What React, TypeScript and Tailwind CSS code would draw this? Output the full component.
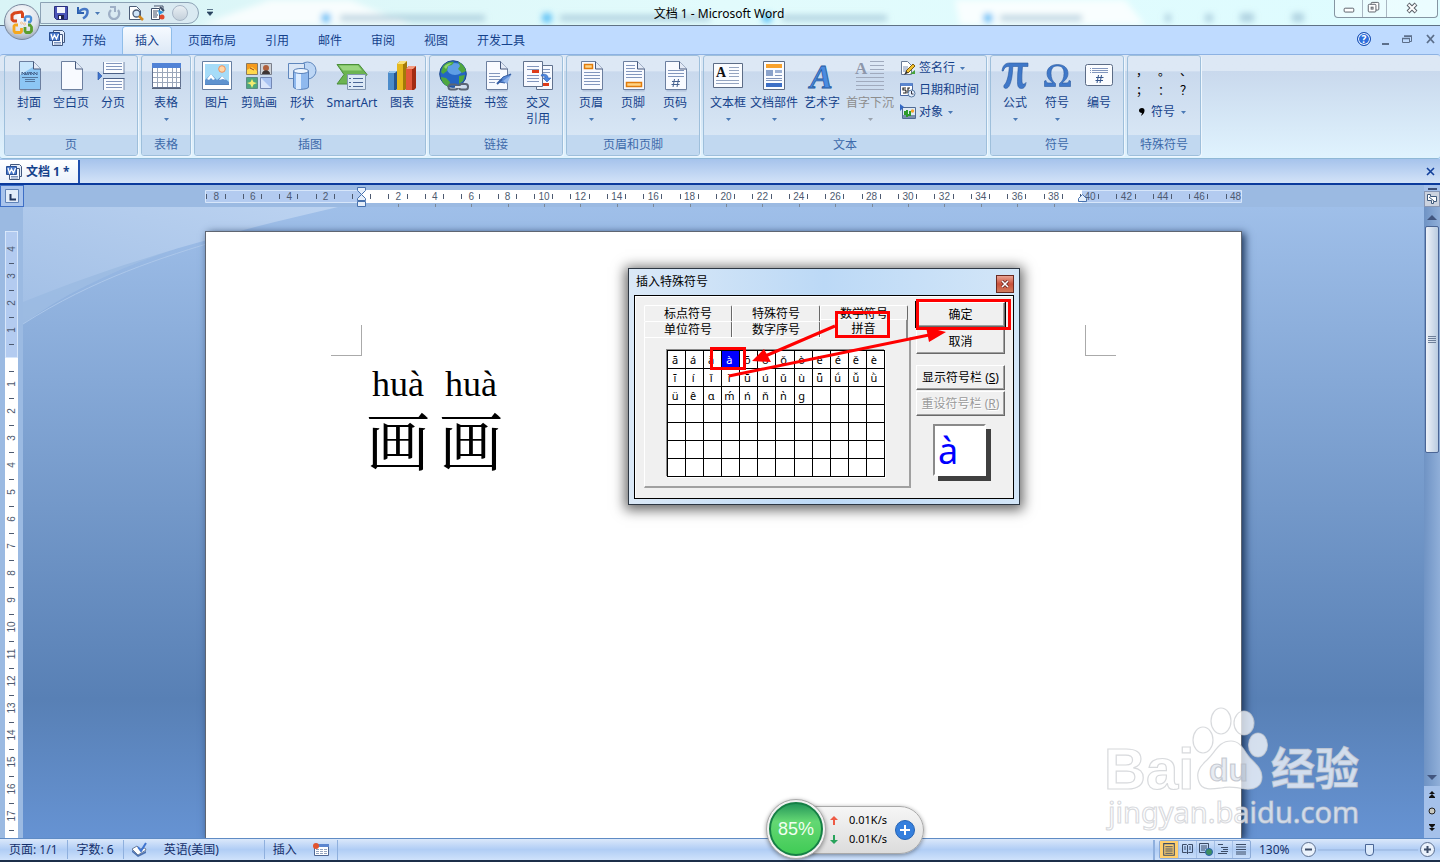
import { ReactNode, useState } from "react";

type Tool = {
  label: string;
  second?: string;
  icon: ReactNode;
  width: string;
  arrow?: boolean;
  disabled?: boolean;
};

const tabs = ["开始", "插入", "页面布局", "引用", "邮件", "审阅", "视图", "开发工具"];

const symbolRows = [
  ["ā", "á", "ǎ", "à", "ō", "ó", "ǒ", "ò", "ē", "é", "ě", "è"],
  ["ī", "í", "ǐ", "ì", "ū", "ú", "ǔ", "ù", "ǖ", "ǘ", "ǚ", "ǜ"],
  ["ü", "ê", "ɑ", "ḿ", "ń", "ň", "ǹ", "ɡ", "", "", "", ""],
  Array(12).fill(""),
  Array(12).fill(""),
  Array(12).fill(""),
  Array(12).fill(""),
];

function Lines({ x1, x2, ys, color = "#8296bd" }: { x1: number; x2: number; ys: number[]; color?: string }) {
  return (
    <g stroke={color} strokeWidth="1">
      {ys.map((y) => (
        <path key={y} d={`M${x1} ${y + 0.5}H${x2}`} />
      ))}
    </g>
  );
}

function Big({ children }: { children: ReactNode }) {
  return (
    <svg viewBox="0 0 32 32" className="h-8 w-8 shrink-0" aria-hidden="true">
      {children}
    </svg>
  );
}

function Sheet({ fill = "#f8faff" }: { fill?: string }) {
  return (
    <>
      <path d="M7.5 3.5h14l6 7v21h-20z" fill="#8fa3c4" opacity=".4" />
      <path d="M6.500 1.500h14l7 7.500v20.500h-21z" fill={fill} stroke="#6c7f9f" />
      <path d="M20.500 1.500v7.500h7" fill="#e3eaf6" stroke="#46597c" />
    </>
  );
}

const CoverIcon = (
  <Big>
    <Sheet fill="#8cc6f4" />
    <path d="M7 2h13v5l-13 8z" fill="#c8e6fc" />
    <path d="M9 15v-3l3 3v-3l1 3 2-3v3l2-3 1 3v-3l3 3v-3l3 3v-3" fill="none" stroke="#46658f" />
    <Lines x1={9} x2={25} ys={[17]} color="#54779f" />
    <Lines x1={12} x2={22} ys={[19, 21]} color="#54779f" />
  </Big>
);

const BlankIcon = (
  <Big>
    <Sheet />
  </Big>
);

const BreakIcon = (
  <Big>
    <path d="M6.500 2v11.500h20.500V2M6.500 30V18.500h20.500V30" fill="#fafcff" stroke="#7689ab" />
    <path d="M6 13.500h21.500M6 18.500h21.500" stroke="#4a5f86" />
    <Lines x1={9} x2={25} ys={[3, 6, 9, 21, 24, 27]} />
    <path d="M1 12l4 4-4 4z" fill="#3f74d0" stroke="#23509f" strokeWidth=".6" />
  </Big>
);

const TableIcon = (
  <Big>
    <path d="M2.500 3.500h28v24h-28z" fill="#fff" stroke="#61718f" />
    <path d="M2 3h29v5H2z" fill="#5082d6" />
    <path d="M3 12.500h27M3 17.500h27M3 22.500h27M7.500 8v19M12.500 8v19M17.500 8v19M22.500 8v19M26.500 8v19" stroke="#9ba7ba" />
    <path d="M2 28.500h29" stroke="#58657c" />
  </Big>
);

const PictureIcon = (
  <Big>
    <path d="M1.500 1.500h29v28h-29z" fill="#fff" stroke="#667fa2" />
    <path d="M4 4h24v20H4z" fill="#a6dcf8" />
    <circle cx="21" cy="9" r="3.300" fill="#ffd7a8" stroke="#f0905a" />
    <path d="M4 24v-4l6-6 4 4 2 2 5-4 7 6v2z" fill="#5f93cf" />
    <path d="M6 19l4-5 4 5-2 1-2-2-2 2zM18 20l3-4 4 4-3-1z" fill="#fff" />
    <path d="M4 24.500h24" stroke="#5585c0" />
  </Big>
);

const ClipIcon = (
  <Big>
    <path d="M3.500 3.500h11v11h-11z" fill="#f59a1d" stroke="#8a7a5e" />
    <path d="M4 10l5-3 5 4v3H4z" fill="#ffd84b" />
    <path d="M7 8l4 2" stroke="#a43e1b" />
    <path d="M17.500 3.500h11v11h-11z" fill="#cfd3d8" stroke="#7a7f8b" />
    <circle cx="23" cy="8" r="3" fill="#b0603c" />
    <path d="M19 14c0-5 8-5 8 0z" fill="#3d3434" />
    <path d="M3.500 17.500h11v11h-11z" fill="#4ea77d" stroke="#5b8d84" />
    <path d="M9 19l1.500 3 3.500 1-3.500 1.500L9 28l-1.500-3.500L4 23l3.500-1z" fill="#f3ec6f" />
    <path d="M17.500 17.500h11v11h-11z" fill="#a9c3f2" stroke="#7488b4" />
    <path d="M18 18l10 10H18z" fill="#d9e5fb" />
  </Big>
);

const ShapesIcon = (
  <Big>
    <circle cx="21.500" cy="10.500" r="8.500" fill="#bcd6f5" stroke="#5f87bd" />
    <path d="M2.500 3.500h16v15h-16z" fill="#dbe7f6" stroke="#5f87bd" />
    <path d="M7.500 11v16c0 3 15 3 15 0V11z" fill="#8fb9ee" stroke="#5880b8" />
    <path d="M10 12v17h5V12z" fill="#dcecff" />
    <ellipse cx="15" cy="11" rx="7.500" ry="2.500" fill="#eef6ff" stroke="#5880b8" />
  </Big>
);

const SmartArtIcon = (
  <Big>
    <path d="M1 4.500h22l8 10-8 9.500H1l7-9.500z" fill="#6cb452" stroke="#4b8f3a" />
    <path d="M3 5.500h19l4 5H7z" fill="#9ad57f" />
    <path d="M11.500 14.500h18v15h-18z" fill="#dce9f6" stroke="#8196b0" />
    <Lines x1={17} x2={27} ys={[18, 22, 26]} color="#4b6796" />
    <Lines x1={13} x2={15} ys={[18, 22, 26]} color="#4b6796" />
  </Big>
);

const ChartIcon = (
  <Big>
    <path d="M2 13l2-2h8v17l-2 2H2z" fill="#27568e" />
    <path d="M2 13h6v17H2z" fill="#4c8ccb" />
    <path d="M2 13l2-2h7l-2 2z" fill="#97c6ee" />
    <path d="M11 4l3-3h7v27l-2 2h-8z" fill="#a37a08" />
    <path d="M11 4h6v26h-6z" fill="#e5b81d" />
    <path d="M11 4l3-3h7l-3 3z" fill="#fae27c" />
    <path d="M20 9l3-3h7v22l-2 2h-8z" fill="#a22c13" />
    <path d="M20 9h6v21h-6z" fill="#e2573a" />
    <path d="M20 9l3-3h7l-3 3z" fill="#f59d82" />
  </Big>
);

const GlobeIcon = (
  <Big>
    <circle cx="15" cy="14" r="13.300" fill="#2465c4" stroke="#1d4889" />
    <ellipse cx="17" cy="9" rx="8" ry="6" fill="#77b6f4" opacity=".7" />
    <path d="M5 6c3-4 8-5 11-4l-2 3-4 1-1 5-4 3-2-2zM20 2c4 1 7 5 8 9l-4 2-4-4 2-3zM3 17l5 1 4 4-1 5c-4-1-8-6-8-10zM21 16l6-1-2 6-4 3z" fill="#4fa73f" />
    <path d="M6 7c2-3 5-4 8-4l-4 3-2 3z" fill="#8fd56d" />
    <rect x="10.500" y="24.500" width="9" height="5" rx="2.500" fill="none" stroke="#5a6575" strokeWidth="2" />
    <rect x="21" y="24" width="9" height="5.500" rx="2.500" fill="none" stroke="#5a6575" strokeWidth="2" />
    <path d="M17 27h7" stroke="#d7dee8" strokeWidth="2" />
  </Big>
);

const BookmarkIcon = (
  <Big>
    <Sheet />
    <Lines x1={9} x2={20} ys={[13, 16, 19]} />
    <Lines x1={9} x2={15} ys={[22]} />
    <path d="M31 14l-8 3-4 5 6 1z" fill="#5a8ad6" stroke="#345da3" />
    <path d="M22 19l-5 5" stroke="#345da3" strokeWidth="2" />
    <path d="M31 15l-4 9-4-3z" fill="#8fb3ea" />
  </Big>
);

const CrossRefIcon = (
  <Big>
    <path d="M14.500 5.500h16v24h-16z" fill="#f7faff" stroke="#61728e" />
    <Lines x1={21} x2={28} ys={[9, 12]} />
    <path d="M1.500 1.500h19v25h-19z" fill="#f8faff" stroke="#61728e" />
    <Lines x1={5} x2={17} ys={[6, 9, 15, 18, 21]} />
    <path d="M10 10h7v3h-7zM21 23h6v3h-6z" fill="#dd3b1a" />
    <path d="M20 14c4 0 6 1 6 4h3l-4 4-4-4h2c0-2-1-2-4-2z" fill="#4b86df" stroke="#2e5cab" strokeWidth=".6" />
  </Big>
);

const HeaderIcon = (
  <Big>
    <Sheet />
    <path d="M9.500 4.500h8v4h-8z" fill="#ffd385" stroke="#e07b0c" strokeWidth="1.500" />
    <Lines x1={9} x2={25} ys={[12, 15, 18, 21, 24]} />
  </Big>
);

const FooterIcon = (
  <Big>
    <Sheet />
    <Lines x1={9} x2={18} ys={[5, 8]} />
    <Lines x1={9} x2={25} ys={[11, 14, 17]} />
    <path d="M9.500 22.500h15v4h-15z" fill="#ffd385" stroke="#e07b0c" strokeWidth="1.500" />
  </Big>
);

const PageNumberIcon = (
  <Big>
    <Sheet />
    <Lines x1={9} x2={25} ys={[10, 13, 16]} />
    <path d="M15.500 19l-1.500 8M19.500 19l-1.500 8M13 21.500h8M12.500 24.500h8" stroke="#46618f" />
  </Big>
);

const TextBoxIcon = (
  <Big>
    <path d="M1.500 3.500h29v24h-29z" fill="#fafcff" stroke="#5c6c86" />
    <Lines x1={17} x2={27} ys={[7, 10, 13, 16]} color="#94a4c0" />
    <Lines x1={4} x2={27} ys={[20, 23]} color="#94a4c0" />
    <text x="4" y="17" fontSize="14" fontWeight="bold" fontFamily="Liberation Serif, serif" fill="#111">A</text>
  </Big>
);

const PartsIcon = (
  <Big>
    <path d="M5.500 1.500h21v28h-21z" fill="#fafcff" stroke="#5c6c86" />
    <path d="M8 4h16v4H8z" fill="#f8a22d" />
    <path d="M8 10h7v6H8z" fill="#8ba3cb" />
    <path d="M17 10h7v3h-7z" fill="#9eb2d4" />
    <Lines x1={17} x2={24} ys={[15]} />
    <Lines x1={8} x2={24} ys={[18, 20]} />
    <path d="M8 23h16v4H8z" fill="#3c6fc6" />
  </Big>
);

const WordArtIcon = (
  <Big>
    <text x="4" y="28" fontSize="34" fontStyle="italic" fontWeight="bold" fontFamily="Liberation Serif, serif" fill="#4a8be0" stroke="#24599f" strokeWidth=".8">A</text>
  </Big>
);

const DropCapIcon = (
  <Big>
    <text x="1" y="14" fontSize="17" fontWeight="bold" fontFamily="Liberation Serif, serif" fill="#8d97ab">A</text>
    <Lines x1={16} x2={30} ys={[1, 5, 9, 13]} color="#a0aabd" />
    <Lines x1={2} x2={30} ys={[17, 21, 25, 29]} color="#a0aabd" />
  </Big>
);

const PiIcon = (
  <Big>
    <path d="M3 11c.5-5 3-8 7.500-8H29v3.500h-5.500c-.5 6-.8 11-.5 15 .2 3 2 3.500 4 1-.3 4-2 6-4.500 6-3.500 0-4-3-4-7 0-5 .3-10 .8-15h-5.500c-.3 9-1.500 16-4 20-1.500 2.500-5 2.500-5 0 0-1.500 1-2 2-3.500 2-4 3-9 3.500-16.500-3-.2-4.800 1-6 4.500z" fill="#3f78c9" stroke="#2c5b9f" strokeWidth=".6" />
  </Big>
);

const OmegaIcon = (
  <Big>
    <path d="M3.500 26.500v-5.500l1.500-.5c.5 2 1 2.500 3 2.500h4c-4-3-6-6-6-9.500 0-5.500 4-9 10.500-9s10.500 3.500 10.500 9c0 3.500-2 6.500-6 9.500h4c2 0 2.500-.5 3-2.500l1.500.5v5.500H18.500v-3c3-2 4.500-5.500 4.500-10 0-5-2-7.500-6.500-7.500S10 8.500 10 13.500c0 4.500 1.500 8 4.500 10v3z" fill="#3f78c9" stroke="#2c5b9f" strokeWidth=".6" />
  </Big>
);

const NumberIcon = (
  <Big>
    <rect x="2.500" y="4.500" width="27" height="21" rx="2" fill="#fafcff" stroke="#5c6c86" />
    <Lines x1={9} x2={25} ys={[8, 10, 12]} />
    <Lines x1={7} x2={8} ys={[8, 10, 12]} />
    <path d="M15.500 15l-1.500 8M18.500 15l-1.500 8M13 17.500h7.500M12.500 20.500h7.500" stroke="#34558c" />
  </Big>
);

function Caret({ disabled }: { disabled?: boolean }) {
  return (
    <svg viewBox="0 0 5 3" className="h-[3px] w-[5px] shrink-0" aria-hidden="true">
      <path d="M0 0h5L2.500 3z" fill={disabled ? "#9aa3ae" : "#4a79b5"} />
    </svg>
  );
}

function ToolButton({ tool }: { tool: Tool }) {
  return (
    <button
      disabled={tool.disabled}
      className={`flex flex-col items-center whitespace-nowrap ${tool.width} ${tool.disabled ? "text-[#8d8d8d]" : "text-[#15428b]"}`}
    >
      {tool.icon}
      <span className="mt-[3px] leading-4">{tool.label}</span>
      {tool.second && <span className="leading-4">{tool.second}</span>}
      {tool.arrow && (
        <span className="flex h-4 items-center">
          <Caret disabled={tool.disabled} />
        </span>
      )}
    </button>
  );
}

function Group({ title, tools = [], children }: { title: string; tools?: Tool[]; children?: ReactNode }) {
  return (
    <section className="flex shrink-0 flex-col overflow-hidden rounded-[3px] border border-[#9ebfdb] bg-linear-to-b from-[#dde8f5] from-15% via-[#c9d9ed] via-16% to-[#dceaf7] shadow-[1px_1px_0_#eef6fd]">
      <div className="flex flex-1 items-start px-[3px] pt-1">
        {tools.map((tool) => (
          <ToolButton key={tool.label} tool={tool} />
        ))}
        {children}
      </div>
      <h2 className="h-5 bg-[#c1d8f0] text-center leading-5 text-[#3e6aaa]">{title}</h2>
    </section>
  );
}

function WordIcon() {
  return (
    <svg viewBox="0 0 16 16" className="h-4 w-4 shrink-0" aria-hidden="true">
      <path d="M4.500.5h9l2 2v10h-11z" fill="#e6eefb" stroke="#42587f" />
      <path d="M3.500 4.500h10v11h-10z" fill="#f4f8ff" stroke="#42587f" />
      <path d="M5 12.500h7M5 14h7" stroke="#7c93bc" />
      <path d="M.5 2.500h10v8H.5z" fill="#4a78c8" stroke="#274d92" />
      <path d="M2 4l1.500 5L5.500 5l2 4L9.500 4" fill="none" stroke="#fff" strokeWidth="1.300" />
    </svg>
  );
}

function OfficeButton() {
  return (
    <button aria-label="Office" className="absolute top-1 left-1 z-10 h-9 w-9">
      <svg viewBox="0 0 36 36" className="h-full w-full">
        <defs>
          <radialGradient id="orb" cx=".5" cy=".3" r=".75">
            <stop offset="0" stopColor="#fff" />
            <stop offset=".6" stopColor="#dde3eb" />
            <stop offset="1" stopColor="#93a0b3" />
          </radialGradient>
        </defs>
        <circle cx="18" cy="18" r="17.500" fill="url(#orb)" stroke="#77869c" />
        <g fill="none" strokeLinejoin="round">
          <path d="M13 17H9.500L8 15.500V11L10.500 9l7-1 1 1.500V14" stroke="#d8471c" strokeWidth="3" />
          <path d="M21 17.500V14l1-1.500h4l1 1v3l-1 1.500h-2" stroke="#4a8fd8" strokeWidth="2.400" />
          <path d="M14 21h-3l-1 1v5l1 1.500h5.500l1-1V24" stroke="#f5a81d" strokeWidth="2.800" />
          <path d="M21 23v4l1 1.500h4l1.500-1.500v-4L26 21h-2" stroke="#5a9e2d" strokeWidth="2.800" />
        </g>
        <g fill="#fff" stroke="#e9a05a" strokeWidth=".6">
          <circle cx="17.500" cy="19" r="1" />
          <circle cx="20.500" cy="20" r="1" />
        </g>
      </svg>
    </button>
  );
}

function TitleBar() {
  return (
    <header className="relative flex h-[26px] shrink-0 items-start justify-between border-b border-[#5f7285] bg-linear-to-r from-[#d9f4f6] via-[#e2fbfc] to-[#defcff]">
      {/* tabs of the window behind showing through the glass */}
      <svg className="absolute inset-0 h-full w-full" aria-hidden="true">
        <defs>
          <filter id="glass" x="-20%" y="-50%" width="140%" height="200%">
            <feGaussianBlur stdDeviation="3" />
          </filter>
        </defs>
        <g filter="url(#glass)">
          <path d="M270 0h80l60 25H200zM955 0h170l20 25H960z" fill="#fff" opacity=".8" />
          <g fill="#8fb6cc" opacity=".6">
            <path d="M340 15h145v6H340zM560 15h150v6H560zM782 15h105v6H782zM1000 15h82v6h-82zM1165 14h6v8h-6zM1205 14h8v8h-8zM1240 13h14v9h-14zM1292 13h12v9h-12z" />
          </g>
          <g fill="#55bdf5">
            <circle cx="326" cy="18" r="5" />
            <circle cx="547" cy="18" r="5" />
            <circle cx="767" cy="18" r="5" />
            <circle cx="988" cy="18" r="5" />
          </g>
        </g>
      </svg>
      <div className="relative flex flex-1 items-start">
        <div className="mt-[2px] ml-10 flex h-[22px] w-[159px] items-center rounded-r-full border border-[#8ca2b5] bg-[#d9e7f0]/80 pl-3">
          <button aria-label="保存" className="h-4 w-4">
            <svg viewBox="0 0 16 16">
              <path d="M1.500 1.500h13v13h-11l-2-2z" fill="#4b55b8" stroke="#2a2f7d" />
              <path d="M4 2h8v6H4z" fill="#f2f4fb" />
              <path d="M5 10h6v4H5z" fill="#20244e" />
              <path d="M6 11h2v3H6z" fill="#fff" />
            </svg>
          </button>
          <button aria-label="撤消" className="ml-[6px] h-4 w-4">
            <svg viewBox="0 0 16 16">
              <path d="M3 2v6h6" fill="none" stroke="#2c5fae" strokeWidth="2" />
              <path d="M4 7c3-4 9-4 8.500 0 0 3-2 5-4.500 6.500" fill="none" stroke="#4678c6" strokeWidth="2.600" />
            </svg>
          </button>
          <span className="ml-1">
            <Caret />
          </span>
          <button aria-label="恢复" className="ml-[6px] h-4 w-4">
            <svg viewBox="0 0 16 16">
              <path d="M12 5c3 4 0 9-4 9s-7-5-3-9" fill="none" stroke="#9fb0c6" strokeWidth="2.200" />
              <path d="M4 2h5v5" fill="none" stroke="#9fb0c6" strokeWidth="2" />
            </svg>
          </button>
          <button aria-label="打印预览" className="ml-[6px] h-4 w-4">
            <svg viewBox="0 0 16 16">
              <path d="M1.500 1.500h7l4 4v9h-11z" fill="#fff" stroke="#4b5c77" />
              <circle cx="8.500" cy="8.500" r="3.500" fill="#cfe4f8" stroke="#4b5c77" strokeWidth="1.300" />
              <path d="M11 11l4 4" stroke="#d58a1d" strokeWidth="2.500" />
            </svg>
          </button>
          <button aria-label="修订" className="ml-[6px] h-4 w-4">
            <svg viewBox="0 0 16 16">
              <path d="M1.500 3.500h8v11h-8zM4 1h9v5" fill="#fff" stroke="#3f4f68" />
              <path d="M3 6h5M3 8h4M3 10h5M3 12h4" stroke="#3f4f68" />
              <path d="M8 5l6 2-5 3z" fill="#2d91d8" />
              <circle cx="12" cy="12" r="2.500" fill="#e3492c" />
              <path d="M10 2l4 4" stroke="#3f4f68" strokeWidth="2" />
            </svg>
          </button>
          <button aria-label="其他" className="ml-[6px] h-4 w-4 rounded-full border border-[#a8b6c6] bg-linear-to-b from-[#e9eff4] to-[#c4d0db]" />
        </div>
        <button aria-label="自定义快速访问工具栏" className="mt-[9px] ml-2">
          <svg viewBox="0 0 6 7" className="h-[7px] w-[6px]">
            <path d="M0 .5h6M0 3h6L3 6.500z" fill="#28425e" stroke="#28425e" strokeWidth=".7" />
          </svg>
        </button>
      </div>
      <h1 className="relative pt-[5px] leading-[18px] text-black">文档 1 - Microsoft Word</h1>
      <div className="relative flex flex-1 justify-end pr-[2px]">
        <div className="flex h-[18px] rounded-b-[4px] border border-t-0 border-[#8595a2] bg-white/40">
          <button aria-label="最小化" className="w-7 border-r border-[#a9b7c2]">
            <svg viewBox="0 0 28 17">
              <rect x="9.500" y="8.500" width="10" height="4" rx="1" fill="#fff" stroke="#5b6068" />
            </svg>
          </button>
          <button aria-label="还原" className="w-6 border-r border-[#a9b7c2]">
            <svg viewBox="0 0 24 17">
              <rect x="8.500" y="2.500" width="8" height="8" rx="1" fill="#fff" stroke="#5b6068" />
              <rect x="5.500" y="4.500" width="8" height="8" rx="1" fill="#fff" stroke="#5b6068" />
              <rect x="8.500" y="7.500" width="2" height="2" fill="#fff" stroke="#5b6068" />
            </svg>
          </button>
          <button aria-label="关闭" className="w-[50px]">
            <svg viewBox="0 0 50 17">
              <path d="M21 4l8 8M29 4l-8 8" stroke="#5b6068" strokeWidth="4" />
              <path d="M21.500 4.500l7 7M28.500 4.500l-7 7" stroke="#fff" strokeWidth="2" />
            </svg>
          </button>
        </div>
      </div>
    </header>
  );
}

function TabRow() {
  const [active, setActive] = useState("插入");
  return (
    <nav className="flex h-7 shrink-0 items-end bg-[#bfdbff] pl-[49px] text-[#15428b]">
      <div className="mb-2 mr-[5px]">
        <WordIcon />
      </div>
      <div className="flex h-[27px] gap-[5px]">
        {tabs.map((tab) => (
          <button
            key={tab}
            onClick={() => setActive(tab)}
            className={`rounded-t-[3px] px-3 leading-[24px] ${active === tab ? "bg-linear-to-b from-[#f6faff] to-[#dce8f6] shadow-[0_0_0_1px_#8fbde9]" : ""}`}
          >
            {tab}
          </button>
        ))}
      </div>
      <div className="mb-2 ml-auto flex items-center gap-[11px] pr-1">
        <button aria-label="帮助" className="h-[14px] w-[14px] rounded-full border border-[#1a4fb0] bg-[#2f6fdc] text-[10px] leading-3 font-bold text-white shadow-[inset_0_0_0_1px_#fff]">
          ?
        </button>
        <button aria-label="最小化文档" className="flex h-3 w-2 items-end">
          <span className="h-[2px] w-[7px] bg-[#5c6f8a]" />
        </button>
        <button aria-label="还原文档" className="h-3 w-3">
          <svg viewBox="0 0 12 12">
            <path d="M3.500 4V3.500h7v5H9M1.500 5.500h7v4h-7z" fill="none" stroke="#5c6f8a" />
            <path d="M3 3h8M1 5.500h8" stroke="#5c6f8a" strokeWidth="1.500" />
          </svg>
        </button>
        <button aria-label="关闭文档" className="h-3 w-3">
          <svg viewBox="0 0 12 12">
            <path d="M3 2l7 8M10 2l-7 8" stroke="#5c6f8a" strokeWidth="1.800" />
          </svg>
        </button>
      </div>
    </nav>
  );
}

function Ribbon() {
  return (
    <div className="flex h-[105px] shrink-0 gap-[3px] overflow-hidden rounded-[3px] border-t border-b border-[#8db2e3] border-b-[#8fb8d6] bg-linear-to-b from-[#dde8f5] from-15% via-[#c9d9ed] via-16% to-[#e0f3fe] px-1 pb-[2px]">
      <Group
        title="页"
        tools={[
          { label: "封面", icon: CoverIcon, width: "w-[42px]", arrow: true },
          { label: "空白页", icon: BlankIcon, width: "w-[42px]" },
          { label: "分页", icon: BreakIcon, width: "w-[42px]" },
        ]}
      />
      <Group title="表格" tools={[{ label: "表格", icon: TableIcon, width: "w-[42px]", arrow: true }]} />
      <Group
        title="插图"
        tools={[
          { label: "图片", icon: PictureIcon, width: "w-[38px]" },
          { label: "剪贴画", icon: ClipIcon, width: "w-[46px]" },
          { label: "形状", icon: ShapesIcon, width: "w-[40px]", arrow: true },
          { label: "SmartArt", icon: SmartArtIcon, width: "w-[60px]" },
          { label: "图表", icon: ChartIcon, width: "w-[40px]" },
        ]}
      />
      <Group
        title="链接"
        tools={[
          { label: "超链接", icon: GlobeIcon, width: "w-[42px]" },
          { label: "书签", icon: BookmarkIcon, width: "w-[42px]" },
          { label: "交叉", second: "引用", icon: CrossRefIcon, width: "w-[42px]" },
        ]}
      />
      <Group
        title="页眉和页脚"
        tools={[
          { label: "页眉", icon: HeaderIcon, width: "w-[42px]", arrow: true },
          { label: "页脚", icon: FooterIcon, width: "w-[42px]", arrow: true },
          { label: "页码", icon: PageNumberIcon, width: "w-[42px]", arrow: true },
        ]}
      />
      <Group
        title="文本"
        tools={[
          { label: "文本框", icon: TextBoxIcon, width: "w-[42px]", arrow: true },
          { label: "文档部件", icon: PartsIcon, width: "w-[50px]", arrow: true },
          { label: "艺术字", icon: WordArtIcon, width: "w-[46px]", arrow: true },
          { label: "首字下沉", icon: DropCapIcon, width: "w-[50px]", arrow: true, disabled: true },
        ]}
      >
        <div className="-mt-[3px] flex w-[88px] flex-col pl-[5px] text-[#15428b]">
          <button className="flex h-[22px] items-center gap-[3px] whitespace-nowrap">
            <svg viewBox="0 0 16 16" className="h-4 w-4">
              <path d="M1.500 1.500h6l4 4v9h-10z" fill="#fff" stroke="#6a7b96" />
              <path d="M3 7h5M3 9h5M3 11h4" stroke="#7c90b4" />
              <path d="M13 4l-7 7 2 2 7-7z" fill="#f2c131" stroke="#7b5a0e" />
              <path d="M6 11l-2 4 4-2z" fill="#333" />
              <path d="M10 14h5v-4z" fill="#46a13b" />
            </svg>
            签名行
            <span className="ml-[2px]">
              <Caret />
            </span>
          </button>
          <button className="flex h-[22px] items-center gap-[3px] whitespace-nowrap">
            <svg viewBox="0 0 16 16" className="h-4 w-4">
              <path d="M.5 1.500h12v12H.5z" fill="#fff" stroke="#4969a4" />
              <path d="M.5 1h12v3H.5z" fill="#5a86cf" />
              <path d="M6 6H3v2h2.500l.5 1v2H3M10 6H8v5" fill="none" stroke="#222" strokeWidth="1.200" />
              <circle cx="11.500" cy="11.500" r="3.500" fill="#e4effc" stroke="#55779f" />
              <path d="M11.500 9v3h2" fill="none" stroke="#334" />
            </svg>
            日期和时间
          </button>
          <button className="flex h-[22px] items-center gap-[3px] whitespace-nowrap">
            <svg viewBox="0 0 16 16" className="h-4 w-4">
              <path d="M2.500 3.500h13v11h-13z" fill="#dfeaf5" stroke="#506b94" />
              <path d="M3 11h12v3H3z" fill="#7a8fae" />
              <path d="M7 13V6M7 10H5V7M7 11h3V7" stroke="#2d9b2a" strokeWidth="2" fill="none" />
              <circle cx="12.500" cy="7" r="1.700" fill="#f5a52d" />
              <path d="M0 0l4 3-4 4z" fill="#3267c4" />
            </svg>
            对象
            <span className="ml-[2px]">
              <Caret />
            </span>
          </button>
        </div>
      </Group>
      <Group
        title="符号"
        tools={[
          { label: "公式", icon: PiIcon, width: "w-[42px]", arrow: true },
          { label: "符号", icon: OmegaIcon, width: "w-[42px]", arrow: true },
          { label: "编号", icon: NumberIcon, width: "w-[42px]" },
        ]}
      />
      <Group title="特殊符号">
        <div className="w-[66px] pt-[2px] text-black">
          <div className="grid grid-cols-3 text-center">
            {["，", "。", "、", "；", "：", "？"].map((mark) => (
              <button key={mark} className="h-[19px] leading-[19px]">
                {mark}
              </button>
            ))}
          </div>
          <button className="flex h-6 items-center gap-[6px] pl-2 text-[#15428b]">
            <svg viewBox="0 0 6 8" className="h-2 w-[6px]">
              <path d="M3 0c4 0 3 6-1 8l1-3C-1 5-1 0 3 0z" fill="#000" />
            </svg>
            符号
            <Caret />
          </button>
        </div>
      </Group>
    </div>
  );
}

function DocumentTabs() {
  return (
    <div className="flex h-[26px] shrink-0 items-end justify-between border-b-2 border-[#0a3a9c] bg-linear-to-b from-[#a6c3ec] to-[#d3e3f8] pt-px">
      <button className="flex h-full items-center gap-1 border-r-2 border-[#1f4fae] bg-linear-to-b from-white to-[#eaf1fb] pr-2 pl-[6px] font-bold text-[#15428b]">
        <WordIcon />
        文档 1 *
      </button>
      <button aria-label="关闭标签" className="mr-[5px] mb-[7px] h-[9px] w-[9px]">
        <svg viewBox="0 0 9 9">
          <path d="M1 1l7 7M8 1L1 8" stroke="#123f9a" strokeWidth="1.600" />
        </svg>
      </button>
    </div>
  );
}

const charWidth = 18.2;

function HorizontalRuler() {
  const marks = Array.from({ length: 29 }, (_, i) => i * 2 - 8);
  const at = (n: number) => 157 + n * charWidth;
  return (
    <svg viewBox="0 0 1038 22" className="h-[22px] w-[1038px]" aria-hidden="true">
      <path d="M.5 5.500h1036v12H.5z" fill="#b3cbf0" stroke="#d7e6fa" />
      <path d="M156 5h721v13H156z" fill="#fff" />
      {marks.map((n) => (
        <g key={n}>
          {n !== 0 && (
            <text x={at(n)} y="15" textAnchor="middle" fontSize="10" fontFamily="Liberation Sans, sans-serif" fill="#4d5a70">
              {Math.abs(n)}
            </text>
          )}
          <path d={`M${Math.round(at(n - 0.5)) - 0.5} 9v5`} stroke="#4d5a70" />
          {n > 0 && n < 40 && <path d={`M${Math.round(at(n)) + 0.5} 19v3`} stroke="#7b8796" />}
        </g>
      ))}
      {marks.slice(0, 28).map((n) => (
        <path key={n} d={`M${Math.round(at(n + 0.5)) - 0.5} 9v5`} stroke="#4d5a70" />
      ))}
      <path d="M152.500 2.500h8v3l-4 4-4-4zM152.500 15.500v-2l4-4 4 4v2zM152.500 16.500h8v5h-8z" fill="#e6effa" stroke="#4771ad" />
      <path d="M873.500 16.500v-3l4-4 4 4v3z" fill="#e6effa" stroke="#4771ad" />
    </svg>
  );
}

function VerticalRuler() {
  const marks = Array.from({ length: 22 }, (_, i) => i - 4);
  return (
    <svg className="mt-6 ml-[5px] w-[13px] flex-1" aria-hidden="true">
      <rect x="0" y="0" width="13" height="1000" fill="#fff" />
      <path d="M.5.5h12v126H.5z" fill="#b3cbf0" stroke="#d7e6fa" />
      {marks.map((n) => {
        const y = 126 + n * 27;
        return (
          <g key={n}>
            {n !== 0 && (
              <text
                transform={`translate(10 ${y}) rotate(-90)`}
                textAnchor="middle"
                fontSize="10"
                fontFamily="Liberation Sans, sans-serif"
                fill="#4d5a70"
              >
                {Math.abs(n)}
              </text>
            )}
            <path d={`M4 ${y + 14.5}h5`} stroke="#4d5a70" />
          </g>
        );
      })}
    </svg>
  );
}

function ScrollColumn() {
  return (
    <div className="flex w-4 shrink-0 flex-col items-center bg-[#a5c1ea] pb-1">
      <div className="mt-[3px] h-[2px] w-[9px] bg-[#3c4f78]" />
      <button aria-label="标尺" className="mt-px h-4 w-4 border border-[#8796b3] bg-[#ccd3df]">
        <svg viewBox="0 0 14 14">
          <path d="M2.500 2.500h3v2h6v5h-3v2h-2v-3h-4z" fill="#fff" stroke="#3f5a7c" />
          <path d="M4 5l5 4" stroke="#3f5a7c" />
        </svg>
      </button>
      <div className="flex w-full flex-1 flex-col items-center bg-linear-to-r from-[#6f93c4] to-[#90afd9]">
        <button aria-label="向上滚动" className="h-[19px] w-full">
          <svg viewBox="0 0 16 18">
            <path d="M3 12h10L8 7z" fill="#42567f" />
          </svg>
        </button>
        <button aria-label="滚动条" className="flex h-[227px] w-[14px] flex-col items-center justify-center gap-px rounded-[2px] border border-[#4a6595] bg-linear-to-r from-[#eef2f8] to-[#b9cbe0]">
          <span className="h-px w-2 bg-[#6e7f99]" />
          <span className="h-px w-2 bg-[#6e7f99]" />
          <span className="h-px w-2 bg-[#6e7f99]" />
          <span className="h-px w-2 bg-[#6e7f99]" />
        </button>
        <button aria-label="向下滚动" className="mt-auto h-[18px] w-full">
          <svg viewBox="0 0 16 18">
            <path d="M3 7h10l-5 5z" fill="#42567f" />
          </svg>
        </button>
      </div>
      <button aria-label="前一页" className="h-4 w-4">
        <svg viewBox="0 0 16 16">
          <path d="M5 8l3-3 3 3zM5 11l3-3 3 3zM5 11h6v1H5z" fill="#111" />
        </svg>
      </button>
      <button aria-label="选择浏览对象" className="h-4 w-4">
        <svg viewBox="0 0 16 16">
          <circle cx="8" cy="9" r="3" fill="#c8c8c0" stroke="#222" />
        </svg>
      </button>
      <button aria-label="下一页" className="h-4 w-4">
        <svg viewBox="0 0 16 16">
          <path d="M5 6h6v1H5zM5 7l3 3 3-3zM5 10l3 3 3-3z" fill="#111" />
        </svg>
      </button>
    </div>
  );
}

function PinyinWord() {
  return (
    <ruby className="flex w-16 flex-col-reverse items-center">
      <span className="font-['Noto_Serif_CJK_SC','Noto_Sans_CJK_SC',serif] text-[64px] leading-[66px]">画</span>
      <rt className="font-['Liberation_Serif',serif] text-[36px] leading-10">huà</rt>
    </ruby>
  );
}

function Page() {
  return (
    <article className="mx-auto mt-6 w-[1037px] max-w-full flex-1 border border-b-0 border-[#5f6672] bg-white px-[125px] pt-[93px] text-black shadow-[3px_2px_8px_#1c355a]">
      <div className="flex justify-between">
        <span className="h-[31px] w-[31px] border-r border-b border-[#aaa]" />
        <span className="h-[31px] w-[31px] border-b border-l border-[#aaa]" />
      </div>
      <div className="ml-[35px] flex gap-[9px] pt-2">
        <PinyinWord />
        <PinyinWord />
      </div>
    </article>
  );
}

const dialogButton =
  "h-[25px] border border-t-white border-l-white border-r-[#696969] border-b-[#696969] bg-[#f0f0f0] shadow-[inset_-1px_-1px_0_#a0a0a0] whitespace-nowrap";

function DialogTab({ label, active }: { label: string; active?: boolean }) {
  return (
    <button
      className={`h-4 w-[88px] rounded-t-[2px] border-t border-l border-t-white border-l-white leading-4 ${
        active ? "relative z-10 -mt-[2px] h-[19px] border-r-2 border-r-[#8a8a8a] bg-[#f0f0f0]" : "border-r border-r-[#696969]"
      }`}
    >
      {label}
    </button>
  );
}

function SymbolDialog() {
  const [picked, setPicked] = useState("à");
  return (
    <div
      role="dialog"
      aria-label="插入特殊符号"
      className="absolute top-[83px] left-[628px] z-20 w-[392px] border border-[#2d3743] bg-linear-to-r from-[#dbe9f7] via-[#bcd9f6] to-[#d3e6f8] px-[5px] pb-[5px] text-black shadow-[0_2px_12px_3px_rgba(0,0,0,0.6)]"
    >
      <div className="flex h-[26px] items-center justify-between pl-[2px]">
        <span>插入特殊符号</span>
        <button aria-label="关闭" className="mt-1 flex h-[18px] w-[18px] items-center justify-center border border-[#6b2a22] bg-linear-to-b from-[#e8a394] via-[#c9503a] to-[#d27a5c]">
          <svg viewBox="0 0 8 8" className="h-2 w-2">
            <path d="M1 1l6 6M7 1L1 7" stroke="#5e2019" strokeWidth="3" />
            <path d="M1 1l6 6M7 1L1 7" stroke="#fff" strokeWidth="1.600" />
          </svg>
        </button>
      </div>
      <div className="flex border border-black bg-[#f0f0f0] pt-[6px] pr-2 pb-[10px] pl-[9px] shadow-[inset_1px_1px_0_#fff]">
        <div className="mt-[3px] w-[267px]">
          <div className="flex">
            <DialogTab label="标点符号" />
            <DialogTab label="特殊符号" />
            <DialogTab label="数学符号" />
          </div>
          <div className="flex h-4">
            <DialogTab label="单位符号" />
            <DialogTab label="数字序号" />
            <DialogTab label="拼音" active />
          </div>
          <div className="border-2 border-t border-l border-[#a0a0a0] border-t-white border-l-white pt-3 pb-[9px] pl-[22px]">
            <table className="w-[218px] table-fixed border-collapse bg-white text-center font-['Noto_Sans','Noto_Sans_CJK_SC',sans-serif] shadow-[-1px_-1px_0_#8a8a8a,1px_1px_0_#fff]">
              <tbody>
                {symbolRows.map((row, y) => (
                  <tr key={y}>
                    {row.map((symbol, x) => (
                      <td
                        key={x}
                        onClick={() => symbol && setPicked(symbol)}
                        className={`h-[18px] border border-black p-0 pr-[3px] text-[11px] leading-4 ${symbol && symbol === picked ? "bg-[#0000ff] text-white" : ""}`}
                      >
                        {symbol}
                      </td>
                    ))}
                  </tr>
                ))}
              </tbody>
            </table>
          </div>
        </div>
        <div className="ml-[5px] flex flex-1 flex-col">
          <button className={`${dialogButton} outline-1 outline-black`}>确定</button>
          <button className={`${dialogButton} mt-[2px]`}>取消</button>
          <button className={`${dialogButton} mt-[11px]`}>
            显示符号栏 (<u>S</u>)
          </button>
          <button disabled className={`${dialogButton} mt-px text-[#9a9a9a] [text-shadow:1px_1px_0_#fff]`}>
            重设符号栏 (<u>R</u>)
          </button>
          <output className="mt-2 ml-[17px] h-[52px] w-[53px] border-2 border-[#8a8a8a] border-r-white border-b-white bg-white pl-[3px] font-['Noto_Sans',sans-serif] text-[36px] leading-[50px] text-[#0000ff] shadow-[5px_5px_0_#404040]">
            {picked}
          </output>
        </div>
      </div>
      {/* steps marked over the dialog */}
      <svg viewBox="0 0 392 238" className="pointer-events-none absolute -top-px -left-px z-20 h-[238px] w-[392px]" aria-hidden="true">
        <g fill="none" stroke="#f00" strokeWidth="3">
          <path d="M289.500 32.500h92v28h-92zM208.500 44.500h52v24h-52zM83.500 80.500h33v20h-33z" />
          <path d="M207 58l-72 31M101 108l200-41" />
        </g>
        <path d="M124 93l12-12 7 13zM318 64l-20-5 3 15z" fill="#f00" />
      </svg>
    </div>
  );
}

function Workspace() {
  return (
    <main className="relative flex min-h-0 flex-1 bg-[#9bbae2]">
      <div className="flex w-[23px] shrink-0 flex-col">
        <button aria-label="制表符" className="flex h-[22px] w-6 items-center justify-center border border-[#3e6fc6] bg-[#a9c4ec]">
          <svg viewBox="0 0 14 14" className="h-[14px] w-[14px]">
            <path d="M.5.5h13v13H.5z" fill="#e3edfa" stroke="#5f83b8" />
            <path d="M5.500 5v5.500H11" fill="none" stroke="#23375f" strokeWidth="2" />
          </svg>
        </button>
        <VerticalRuler />
      </div>
      <div className="flex min-w-0 flex-1 flex-col">
        <div className="flex h-[22px] shrink-0 justify-center">
          <HorizontalRuler />
        </div>
        <div className="relative flex flex-1 flex-col overflow-hidden bg-linear-to-b from-[#9fbfe9] via-[#5880b5] via-78% to-[#6693d3]">
          <svg className="absolute top-0 left-0 h-[120px] w-[330px]" viewBox="0 0 330 120" aria-hidden="true">
            <defs>
              <linearGradient id="wave" x1="0" y1="1" x2="1" y2="0">
                <stop offset="0" stopColor="#a3c0e6" />
                <stop offset="1" stopColor="#bcd3f1" />
              </linearGradient>
            </defs>
            <path d="M0 0h316C200 22 80 58 0 117z" fill="#a1bfe4" opacity=".7" />
            <path d="M0 0h315C200 26 90 58 0 95z" fill="url(#wave)" />
            <path d="M0 117C70 72 140 50 200 32" fill="none" stroke="#acc7ea" />
          </svg>
          <div className="relative flex flex-1 flex-col">
            <Page />
          </div>
        </div>
      </div>
      <ScrollColumn />
      <SymbolDialog />
    </main>
  );
}

function Watermark() {
  return (
    <svg viewBox="0 0 280 140" className="pointer-events-none absolute right-[60px] bottom-[22px] z-10 h-[140px] w-[280px]" aria-hidden="true">
      <g fill="#fff" fillOpacity=".74" stroke="#c8cacf" strokeOpacity=".7" strokeWidth="1.200">
        <text x="4" y="89" fontSize="58" fontWeight="bold" fontFamily="Liberation Sans, sans-serif">Bai</text>
        <ellipse cx="103" cy="40" rx="10" ry="13" />
        <ellipse cx="121" cy="21" rx="10" ry="13" />
        <ellipse cx="144" cy="23" rx="10" ry="12" />
        <ellipse cx="158" cy="45" rx="9.500" ry="12" />
        <path d="M131 41c-12 0-15 10-24 19-9 8-11 14-8 22 3 9 14 7 22 6 8-2 15-1 24 1 10 1 17-3 17-12 0-8-6-13-12-19-6-7-9-17-19-17z" />
        <text x="109" y="81" fontSize="32" fontWeight="bold" fontFamily="Liberation Sans, sans-serif" fill="#9fb0c8" fillOpacity=".25" stroke="#b3b8c2">du</text>
        <text x="171" y="85" fontSize="44" fontWeight="bold" fontFamily="Noto Sans CJK SC, sans-serif">经验</text>
        <text x="8" y="123" fontSize="29" fontFamily="Noto Sans, sans-serif">jingyan.baidu.com</text>
      </g>
    </svg>
  );
}

function SpeedBall() {
  return (
    <aside className="absolute bottom-1 left-[766px] z-30 flex h-[58px] items-center text-black">
      <div className="absolute top-[6px] right-0 left-7 h-12 rounded-r-full border border-[#a9a9a9] bg-linear-to-b from-[#f6f6f6] to-[#dcdcdc] shadow-[0_1px_4px_rgba(0,0,0,0.4)]" />
      <div className="relative flex h-[60px] w-[60px] items-center justify-center rounded-full border border-[#aaa] bg-[#f2f2f2] shadow-[0_1px_4px_rgba(0,0,0,0.4)]">
        <div className="h-[54px] w-[54px] rounded-full border-2 border-[#168046] bg-linear-to-b from-[#23985a] via-[#63d873] via-35% to-[#3fcb55] text-center font-['Liberation_Sans',sans-serif] text-[18px] leading-[50px] text-[#f0fff0]">
          85%
        </div>
      </div>
      <div className="relative mt-[2px] ml-1 font-['Noto_Sans',sans-serif] text-[11px]">
        <p className="flex h-[19px] items-center gap-[11px]">
          <svg viewBox="0 0 8 9" className="h-[9px] w-2">
            <path d="M4 0l4 4H5v5H3V4H0z" fill="#ee5b45" />
          </svg>
          0.01K/s
        </p>
        <p className="flex h-[19px] items-center gap-[11px]">
          <svg viewBox="0 0 8 9" className="h-[9px] w-2">
            <path d="M4 9l4-4H5V0H3v5H0z" fill="#28a35b" />
          </svg>
          0.01K/s
        </p>
      </div>
      <button aria-label="加速" className="relative mt-[2px] mr-[9px] ml-2 h-5 w-5 rounded-full border border-[#2463b4] bg-[#357fdd]">
        <svg viewBox="0 0 18 18">
          <path d="M9 4v10M4 9h10" stroke="#fff" strokeWidth="2" />
        </svg>
      </button>
    </aside>
  );
}

function StatusBar() {
  const views = ["页面视图", "阅读版式视图", "Web 版式视图", "大纲视图", "普通视图"];
  const drawings = [
    <path key="p" d="M3.500 2.500h10v11h-10zM5 5.500h7M5 7.500h7M5 9.500h7M5 11.500h7" />,
    <path key="r" d="M3.500 3.500h4l1 1 1-1h4v8h-4l-1 1-1-1h-4zM8.500 4v9M5 6h2M5 8h2M10 6h2M10 8h2" />,
    <path key="w" d="M2.500 2.500h9v9h-9zM4 5h6M4 7h6M4 9h4" />,
    <path key="o" d="M3 3.500h5M6 6.500h7M8 8.500h5M6 10.500h7M3 12.500h9" />,
    <path key="n" d="M3 3.500h10M3 6h10M3 8.500h10M3 11h10M3 13h10" />,
  ];
  return (
    <footer className="flex h-6 shrink-0 items-center border-t border-b-2 border-t-[#5f8bc4] border-b-[#1c2f4a] bg-linear-to-b from-[#dbe8fa] via-[#b0cdf5] to-[#cfe2fb] text-[#15306b]">
      <span className="border-r border-[#8fb0de] px-[9px] leading-[19px]">页面: 1/1</span>
      <span className="border-r border-[#8fb0de] px-[9px] leading-[19px]">字数: 6</span>
      <button aria-label="校对" className="ml-[7px] h-4 w-[17px]">
        <svg viewBox="0 0 17 16">
          <path d="M1 8l6 5 8-4v2l-8 4-6-5z" fill="#4b71b0" />
          <path d="M1 7l5-3 3 3 5-1 1 2-8 5z" fill="#fff" stroke="#6c7d99" />
          <path d="M7 5l3 4 5-8" fill="none" stroke="#3f74cf" strokeWidth="2" />
        </svg>
      </button>
      <span className="w-[117px] border-r border-[#8fb0de] pl-4 leading-[19px]">英语(美国)</span>
      <span className="pl-2 leading-[19px]">插入</span>
      <button aria-label="宏" className="ml-4 h-4 w-4">
        <svg viewBox="0 0 16 16">
          <path d="M1.500 2.500h14v11h-14z" fill="#fff" stroke="#4f6794" />
          <path d="M1 2h15v3H1z" fill="#5b85cf" />
          <path d="M3 7.500h11M3 9.500h11M3 11.500h11" stroke="#93a3bf" strokeDasharray="3 1" />
          <circle cx="3" cy="4" r="3" fill="#e1532f" />
        </svg>
      </button>
      <span className="ml-2 h-5 border-r border-[#8fb0de]" />
      <span className="ml-auto h-5 border-r-2 border-[#8fb0de]" />
      <div className="ml-1 flex rounded-[2px] border border-[#8cabd8]">
        {views.map((view, i) => (
          <button
            key={view}
            aria-label={view}
            className={`h-[17px] w-[18px] ${i === 0 ? "bg-[#ffcf6e]" : "border-l border-[#a5c0e6]"}`}
          >
            <svg viewBox="0 0 17 17" fill="none" stroke="#3c4c66">
              {drawings[i]}
              {i === 2 && <circle cx="12" cy="11" r="3.500" fill="#3d8e62" stroke="#2b62ad" />}
            </svg>
          </button>
        ))}
      </div>
      <span className="ml-2 w-[42px]">130%</span>
      <button aria-label="缩小" className="h-[15px] w-[15px] rounded-full border border-[#5c6f8f] bg-[#eaf2fc]">
        <svg viewBox="0 0 13 13">
          <path d="M3 6.500h7" stroke="#3d4d68" strokeWidth="2" />
        </svg>
      </button>
      <input
        type="range"
        aria-label="显示比例"
        defaultValue={52}
        className="mx-[2px] h-3 w-[100px] appearance-none bg-linear-to-b from-transparent from-45% via-[#5f7ba8] via-50% to-transparent to-55% [&::-webkit-slider-thumb]:h-3 [&::-webkit-slider-thumb]:w-[9px] [&::-webkit-slider-thumb]:appearance-none [&::-webkit-slider-thumb]:rounded-b-[4px] [&::-webkit-slider-thumb]:border [&::-webkit-slider-thumb]:border-[#4a6696] [&::-webkit-slider-thumb]:bg-[#dceafb]"
      />
      <button aria-label="放大" className="mr-[5px] h-[15px] w-[15px] rounded-full border border-[#5c6f8f] bg-[#eaf2fc]">
        <svg viewBox="0 0 13 13">
          <path d="M3 6.500h7M6.500 3v7" stroke="#3d4d68" strokeWidth="2" />
        </svg>
      </button>
    </footer>
  );
}

export default function App() {
  return (
    <div className="relative flex h-screen flex-col overflow-hidden bg-[#bfdbff] font-['Noto_Sans','Noto_Sans_CJK_SC',sans-serif] text-xs">
      <OfficeButton />
      <TitleBar />
      <TabRow />
      <Ribbon />
      <DocumentTabs />
      <Workspace />
      <StatusBar />
      <Watermark />
      <SpeedBall />
    </div>
  );
}
